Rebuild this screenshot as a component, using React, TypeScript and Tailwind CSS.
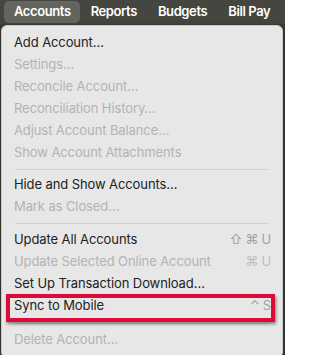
const menuBar = ["Accounts", "Reports", "Budgets", "Bill Pay"];

type Item =
  | { sep: number }
  | { label: string; off?: boolean; keys?: string[]; boxed?: boolean };

const items: Item[] = [
  { label: "Add Account…" },
  { label: "Settings…", off: true },
  { label: "Reconcile Account…", off: true },
  { label: "Reconciliation History…", off: true },
  { label: "Adjust Account Balance…", off: true },
  { label: "Show Account Attachments", off: true },
  { sep: 10 },
  { label: "Hide and Show Accounts…" },
  { label: "Mark as Closed…", off: true },
  { sep: 11 },
  { label: "Update All Accounts", keys: ["⇧", "⌘", "U"] },
  { label: "Update Selected Online Account", off: true, keys: ["⌘", "U"] },
  { label: "Set Up Transaction Download…" },
  { label: "Sync to Mobile", keys: ["⌃", "S"], boxed: true },
  { sep: 12 },
  { label: "Delete Account…", off: true },
];

export default function App() {
  return (
    <div
      className="w-[285px] h-[355px] overflow-hidden bg-[#3a3b35]"
      style={{ fontFamily: "Inter, 'Noto Sans', sans-serif" }}
    >
      {/* menu bar */}
      <div className="h-[24px] flex items-center pl-[4px] gap-[1px] bg-[#45463f] whitespace-nowrap">
        {menuBar.map((m, i) => (
          <div
            key={m}
            className={
              i === 0
                ? "h-[22px] flex items-center pl-[10px] pr-[9px] rounded-[5px] bg-[#62645d] text-white text-[13px] font-semibold tracking-[-0.4px]"
                : "h-[22px] flex items-center px-[10px] text-white text-[13px] font-semibold tracking-[-0.4px]"
            }
          >
            {m}
          </div>
        ))}
      </div>

      {/* dropdown */}
      <div className="ml-[1px] w-[282px] mt-[1px] rounded-[6px] bg-[#e7e7e7] border border-[#c9c9c9] pt-[6px] pb-[6px] shadow-[0_4px_12px_rgba(0,0,0,0.3)]">
        {items.map((it, i) =>
          "sep" in it ? (
            <div
              key={i}
              className={
                "flex items-center px-[13px] " +
                (it.sep === 10 ? "h-[10px]" : it.sep === 11 ? "h-[11px]" : "h-[12px]")
              }
            >
              <div className="h-px w-full bg-[#cfcfcf]" />
            </div>
          ) : (
            <div
              key={i}
              className={
                "relative h-[22px] flex items-center justify-between pl-[12px] pr-[11px] text-[13px] tracking-[-0.1px] whitespace-nowrap " +
                (it.off ? "text-[#b3b3b3]" : "text-[#222222]")
              }
            >
              <span>{it.label}</span>
              {it.keys && (
                <span
                  className={
                    "flex gap-[3px] text-[13px] " +
                    (it.off ? "text-[#bdbdbd]" : "text-[#a2a2a2]")
                  }
                >
                  {it.keys.map((k) => (
                    <span key={k}>{k}</span>
                  ))}
                </span>
              )}
              {it.boxed && (
                <div className="absolute left-[4px] right-[7px] top-[-1px] bottom-[-5px] border-[4px] border-[#dd0b3a] shadow-[1px_2px_3px_rgba(0,0,0,0.45)]" />
              )}
            </div>
          )
        )}
      </div>
    </div>
  );
}
